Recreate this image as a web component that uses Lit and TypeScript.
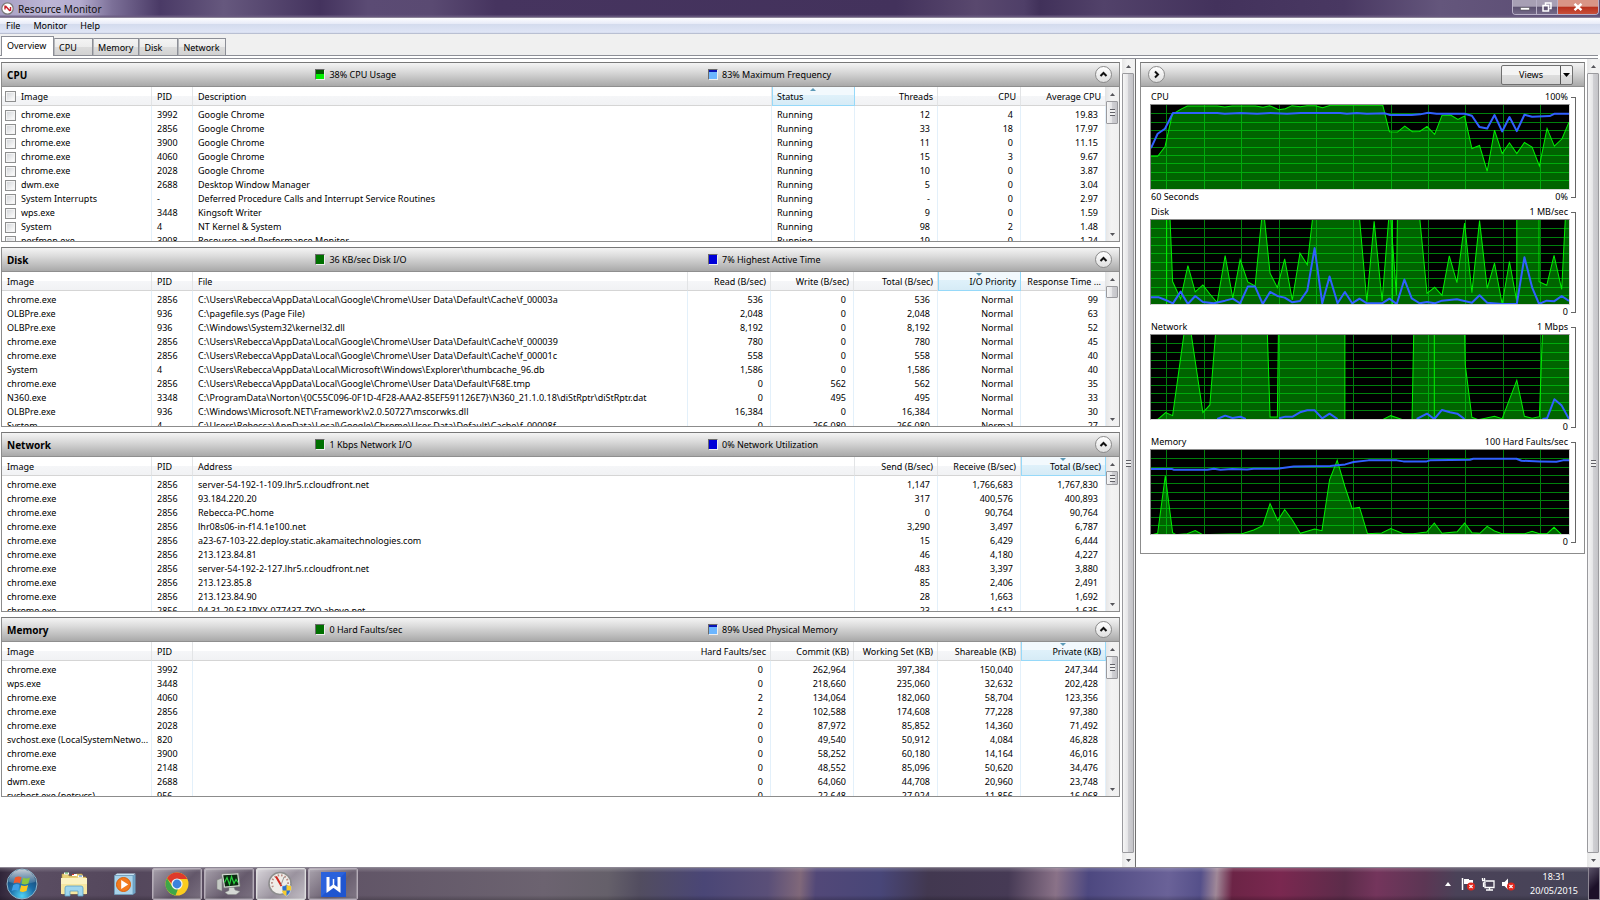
import { LitElement, html, svg, css, nothing } from "lit";
import { customElement, property } from "lit/decorators.js";
import { classMap } from "lit/directives/class-map.js";

type Column = { label: string; width?: number; numeric?: boolean; sorted?: "asc" | "desc" };
type Meter = { kind: string; text: string };
type Section = {
  title: string;
  meters: Meter[];
  checks?: boolean;
  thumb: "short" | "medium" | "long";
  columns: Column[];
  rows: string[][];
};
type Series = { title: string; max: string; min: string; span?: string; green: string; blue: string[]; marks?: number[] };

const CACHE = "C:\\Users\\Rebecca\\AppData\\Local\\Google\\Chrome\\User Data\\Default\\";

const SECTIONS: Section[] = [
  {
    title: "CPU",
    meters: [{ kind: "cpu", text: "38% CPU Usage" }, { kind: "high", text: "83% Maximum Frequency" }],
    checks: true,
    thumb: "long",
    columns: [
      { label: "Image", width: 150 },
      { label: "PID", width: 41 },
      { label: "Description" },
      { label: "Status", width: 83, sorted: "asc" },
      { label: "Threads", width: 83, numeric: true },
      { label: "CPU", width: 83, numeric: true },
      { label: "Average CPU", width: 85, numeric: true },
    ],
    rows: [
      ["chrome.exe", "3992", "Google Chrome", "Running", "12", "4", "19.83"],
      ["chrome.exe", "2856", "Google Chrome", "Running", "33", "18", "17.97"],
      ["chrome.exe", "3900", "Google Chrome", "Running", "11", "0", "11.15"],
      ["chrome.exe", "4060", "Google Chrome", "Running", "15", "3", "9.67"],
      ["chrome.exe", "2028", "Google Chrome", "Running", "10", "0", "3.87"],
      ["dwm.exe", "2688", "Desktop Window Manager", "Running", "5", "0", "3.04"],
      ["System Interrupts", "-", "Deferred Procedure Calls and Interrupt Service Routines", "Running", "-", "0", "2.97"],
      ["wps.exe", "3448", "Kingsoft Writer", "Running", "9", "0", "1.59"],
      ["System", "4", "NT Kernel & System", "Running", "98", "2", "1.48"],
      ["perfmon.exe", "3908", "Resource and Performance Monitor", "Running", "19", "0", "1.24"],
    ],
  },
  {
    title: "Disk",
    meters: [{ kind: "idle", text: "36 KB/sec Disk I/O" }, { kind: "low", text: "7% Highest Active Time" }],
    thumb: "short",
    columns: [
      { label: "Image", width: 150 },
      { label: "PID", width: 41 },
      { label: "File" },
      { label: "Read (B/sec)", width: 83, numeric: true },
      { label: "Write (B/sec)", width: 83, numeric: true },
      { label: "Total (B/sec)", width: 84, numeric: true },
      { label: "I/O Priority", width: 83, numeric: true, sorted: "desc" },
      { label: "Response Time ...", width: 85, numeric: true },
    ],
    rows: [
      ["chrome.exe", "2856", CACHE + "Cache\\f_00003a", "536", "0", "536", "Normal", "99"],
      ["OLBPre.exe", "936", "C:\\pagefile.sys (Page File)", "2,048", "0", "2,048", "Normal", "63"],
      ["OLBPre.exe", "936", "C:\\Windows\\System32\\kernel32.dll", "8,192", "0", "8,192", "Normal", "52"],
      ["chrome.exe", "2856", CACHE + "Cache\\f_000039", "780", "0", "780", "Normal", "45"],
      ["chrome.exe", "2856", CACHE + "Cache\\f_00001c", "558", "0", "558", "Normal", "40"],
      ["System", "4", "C:\\Users\\Rebecca\\AppData\\Local\\Microsoft\\Windows\\Explorer\\thumbcache_96.db", "1,586", "0", "1,586", "Normal", "40"],
      ["chrome.exe", "2856", CACHE + "F68E.tmp", "0", "562", "562", "Normal", "35"],
      ["N360.exe", "3348", "C:\\ProgramData\\Norton\\{0C55C096-0F1D-4F28-AAA2-85EF591126E7}\\N360_21.1.0.18\\diStRptr\\diStRptr.dat", "0", "495", "495", "Normal", "33"],
      ["OLBPre.exe", "936", "C:\\Windows\\Microsoft.NET\\Framework\\v2.0.50727\\mscorwks.dll", "16,384", "0", "16,384", "Normal", "30"],
      ["System", "4", CACHE + "Cache\\f_00008f", "0", "266,080", "266,080", "Normal", "27"],
    ],
  },
  {
    title: "Network",
    meters: [{ kind: "idle", text: "1 Kbps Network I/O" }, { kind: "low", text: "0% Network Utilization" }],
    thumb: "medium",
    columns: [
      { label: "Image", width: 150 },
      { label: "PID", width: 41 },
      { label: "Address" },
      { label: "Send (B/sec)", width: 83, numeric: true },
      { label: "Receive (B/sec)", width: 83, numeric: true },
      { label: "Total (B/sec)", width: 85, numeric: true, sorted: "desc" },
    ],
    rows: [
      ["chrome.exe", "2856", "server-54-192-1-109.lhr5.r.cloudfront.net", "1,147", "1,766,683", "1,767,830"],
      ["chrome.exe", "2856", "93.184.220.20", "317", "400,576", "400,893"],
      ["chrome.exe", "2856", "Rebecca-PC.home", "0", "90,764", "90,764"],
      ["chrome.exe", "2856", "lhr08s06-in-f14.1e100.net", "3,290", "3,497", "6,787"],
      ["chrome.exe", "2856", "a23-67-103-22.deploy.static.akamaitechnologies.com", "15", "6,429", "6,444"],
      ["chrome.exe", "2856", "213.123.84.81", "46", "4,180", "4,227"],
      ["chrome.exe", "2856", "server-54-192-2-127.lhr5.r.cloudfront.net", "483", "3,397", "3,880"],
      ["chrome.exe", "2856", "213.123.85.8", "85", "2,406", "2,491"],
      ["chrome.exe", "2856", "213.123.84.90", "28", "1,663", "1,692"],
      ["chrome.exe", "2856", "94.31.29.53.IPYX-077437-ZYO.above.net", "23", "1,612", "1,635"],
    ],
  },
  {
    title: "Memory",
    meters: [{ kind: "idle", text: "0 Hard Faults/sec" }, { kind: "high", text: "89% Used Physical Memory" }],
    thumb: "long",
    columns: [
      { label: "Image", width: 150 },
      { label: "PID", width: 41 },
      { label: "Hard Faults/sec", numeric: true },
      { label: "Commit (KB)", width: 83, numeric: true },
      { label: "Working Set (KB)", width: 84, numeric: true },
      { label: "Shareable (KB)", width: 83, numeric: true },
      { label: "Private (KB)", width: 85, numeric: true, sorted: "desc" },
    ],
    rows: [
      ["chrome.exe", "3992", "0", "262,964", "397,384", "150,040", "247,344"],
      ["wps.exe", "3448", "0", "218,660", "235,060", "32,632", "202,428"],
      ["chrome.exe", "4060", "2", "134,064", "182,060", "58,704", "123,356"],
      ["chrome.exe", "2856", "2", "102,588", "174,608", "77,228", "97,380"],
      ["chrome.exe", "2028", "0", "87,972", "85,852", "14,360", "71,492"],
      ["svchost.exe (LocalSystemNetwo...", "820", "0", "49,540", "50,912", "4,084", "46,828"],
      ["chrome.exe", "3900", "0", "58,252", "60,180", "14,164", "46,016"],
      ["chrome.exe", "2148", "0", "48,552", "85,096", "50,620", "34,476"],
      ["dwm.exe", "2688", "0", "64,060", "44,708", "20,960", "23,748"],
      ["svchost.exe (netsvcs)", "956", "0", "22,648", "27,924", "11,856", "16,068"],
    ],
  },
];

/* Plot coordinates: 1257 x 251 units, origin at the top left of the plot. */
const CHARTS: Series[] = [
  {
    title: "CPU", max: "100%", min: "0%", span: "60 Seconds",
    green: "0,153 20,153 42,125 64,28 89,13 109,3 199,3 222,6 244,3 314,3 337,7 357,2 384,14 404,11 424,2 449,5 469,2 494,2 516,8 539,1 697,1 717,80 741,81 763,63 786,80 808,79 830,64 853,88 875,31 901,30 923,43 943,33 965,130 988,121 1011,198 1033,75 1056,145 1078,113 1100,145 1123,112 1146,126 1168,182 1191,70 1213,123 1236,101 1257,51",
    blue: ["0,129 20,86 42,71 66,24 199,24 222,26 269,24 319,26 359,24 409,26 449,24 569,24 589,26 619,24 649,26 704,25 719,30 784,30 809,28 834,23 859,26 943,26 965,32 988,66 1011,70 1033,30 1056,79 1078,36 1100,78 1123,29 1146,35 1199,33 1214,26 1257,26"],
  },
  {
    title: "Disk", max: "1 MB/sec", min: "0",
    green: "0,-9 57,-9 65,184 89,236 111,136 133,215 156,194 177,221 199,247 223,106 246,234 268,118 291,185 313,197 333,-6 341,-6 358,159 380,202 402,116 425,239 448,99 470,134 486,-6 627,-6 649,244 671,4 695,242 715,-6 721,-6 738,224 741,-6 808,-6 830,219 853,201 875,225 897,107 920,187 943,9 965,217 988,2 1011,204 1033,129 1056,251 1078,124 1100,244 1100,-6 1167,-6 1167,184 1190,195 1212,106 1235,207 1246,-6 1260,-6",
    blue: ["0,231 24,231 44,239 66,249 89,214 111,251 133,227 156,245 189,249 223,241 246,235 268,249 291,199 313,199 336,251 358,215 380,227 402,232 425,246 448,242 470,211 492,84 515,249 537,169 561,249 583,215 605,249 627,235 649,249 695,249 717,235 739,251 762,178 784,234 808,249 830,245 853,249 875,241 920,237 965,247 988,225 1011,247 1056,251 1100,251 1123,111 1146,201 1167,251 1190,241 1212,243 1235,227 1257,242"],
    marks: [47, 726],
  },
  {
    title: "Network", max: "1 Mbps", min: "0",
    green: "0,256 22,251 44,232 65,241 99,-2 121,-2 156,232 177,209 194,-2 350,-2 358,245 380,245 383,-2 583,-2 583,256 690,256 721,241 757,253 785,256 790,-2 943,-2 945,89 965,246 984,253 999,250 1033,243 1056,250 1100,135 1123,243 1146,249 1168,244 1177,-2 1260,-2",
    blue: ["199,251 223,241 245,248 269,244 285,251", "385,249 404,244 426,244 448,231 470,225 492,225 515,249 537,235 561,251", "799,251 830,235 852,251 875,224 899,231 921,235 943,251", "1177,251 1191,249 1213,192 1235,211 1257,251"],
    marks: [852],
  },
  {
    title: "Memory", max: "100 Hard Faults/sec", min: "0",
    green: "0,254 20,249 43,77 65,247 75,253 109,250 133,241 156,253 274,250 309,239 336,226 358,160 381,211 402,178 425,209 449,249 492,236 514,241 537,89 560,31 583,109 605,175 627,171 651,250 694,248 721,235 759,250 789,250 829,245 852,218 875,249 921,244 943,218 965,247 989,249 1011,228 1033,242 1056,250 1124,250 1146,243 1168,250 1191,250 1212,231 1235,253 1257,253",
    blue: ["0,57 64,57 69,59 169,59 189,56 209,59 244,57 289,58 309,56 379,56 429,49 539,48 584,43 609,36 654,31 739,31 759,34 829,34 839,31 899,30 959,29 969,26 1099,26 1114,32 1169,34 1219,35 1239,31 1257,31"],
  },
];

const V_GRID = [48, 160, 272, 385, 497, 610, 722, 835, 947, 1060, 1172];
const H_GRID = [26, 51, 76, 101, 126, 151, 176, 202, 227];

@customElement("rm-scrollbar")
class RmScrollbar extends LitElement {
  @property() thumb = "fill";

  static styles = css`
    :host { display: flex; flex-direction: column; width: 13px; flex: none; background: linear-gradient(90deg, #e6e6e6, #f3f3f3 40%, #f0f0f0); }
    .arrow { height: 14px; padding: 0; border: 0; background: none; display: flex; align-items: center; justify-content: center; flex: none; }
    .arrow svg { width: 5px; height: 3px; }
    .track { flex: 1; display: flex; flex-direction: column; min-height: 0; }
    .thumb { box-sizing: border-box; width: 12px; border: 1px solid #9a9a9e; border-radius: 1px; background: linear-gradient(90deg, #f6f6f6, #e6e6e8 45%, #cfcfd3 55%, #c4c4c8); display: flex; align-items: center; justify-content: center; }
    .thumb::after { content: ""; width: 5px; height: 7px; background: repeating-linear-gradient(180deg, #606066 0 1px, #f0f0f0 1px 3px); }
    .fill { flex: 1; }
    .long { height: 23px; }
    .medium { height: 14px; }
    .short { height: 12px; }
    .short::after { display: none; }
  `;

  render() {
    return html`
      <button class="arrow" aria-label="Scroll up"><svg viewBox="0 0 5 3"><path d="M0 3 2.5 0 5 3z" fill="#55555a" /></svg></button>
      <div class="track"><div class=${"thumb " + this.thumb}></div></div>
      <button class="arrow" aria-label="Scroll down"><svg viewBox="0 0 5 3"><path d="M0 0 2.5 3 5 0z" fill="#55555a" /></svg></button>
    `;
  }
}

@customElement("rm-section")
class RmSection extends LitElement {
  @property({ attribute: false }) data!: Section;

  static styles = css`
    :host { display: block; border: 1px solid #8c8c8c; border-top-color: #777; background: #fff; }
    .bar { box-sizing: border-box; height: 24px; display: grid; grid-template-columns: 281fr 352fr 347fr 20fr; align-items: center; background: linear-gradient(#f4f4f4, #dcdcdc 35%, #a9a9a9); border-bottom: 1px solid #8f8f8f; }
    h2 { margin: 0; padding-left: 5px; font-size: 10px; line-height: 14px; font-weight: 700; color: #000; }
    .meter { display: flex; align-items: center; gap: 4px; white-space: nowrap; }
    .swatch { box-sizing: border-box; width: 10px; height: 11px; border: 1px solid #6a6a6a; border-right-color: #eee; border-bottom-color: #eee; }
    .cpu { background: linear-gradient(#005a00 50%, #00f000 50%); }
    .idle { background: #007000; }
    .high { background: linear-gradient(#0a14b4 20%, #6cb6ff 20%); }
    .low { background: #0000d8; }
    .toggle { justify-self: end; margin-right: 7px; width: 17px; height: 17px; padding: 0; border: 1px solid #8a8a8a; border-radius: 50%; background: linear-gradient(#fff, #e0e0e0); display: grid; place-items: center; }
    .toggle svg { width: 9px; height: 9px; }
    .body { display: flex; height: 154px; overflow: hidden; }
    .list { flex: 1; min-width: 0; overflow: hidden; }
    table { width: 100%; table-layout: fixed; border-collapse: separate; border-spacing: 0; }
    th, td { box-sizing: border-box; padding: 0 7px 0 5px; text-align: left; font-weight: 400; white-space: nowrap; overflow: hidden; border-right: 1px solid #e3f0fa; }
    th:first-child, td:first-child { padding-right: 0; }
    th { height: 19px; padding-right: 4px; line-height: 17px; border-bottom: 1px solid #d5d5d5; border-right-color: #e2e4e6; background: linear-gradient(#fff 50%, #f5f6f8 50%, #f1f2f4); position: relative; }
    td { height: 14px; line-height: 14px; }
    tbody tr:first-child td { padding-top: 2px; height: 16px; }
    .num { text-align: right; }
    .sorted { background: linear-gradient(#f2f9fd 45%, #dff1fa 45%, #d6ebf6); border-bottom-color: #96d9f9; border-right-color: #96d9f9; box-shadow: inset 1px 0 #96d9f9; }
    .caret { position: absolute; top: 1px; left: calc(50% - 3px); width: 6px; height: 3px; }
    .named { display: flex; align-items: center; gap: 5px; margin-left: -2px; }
    input { appearance: none; box-sizing: border-box; width: 11px; height: 11px; margin: 0; flex: none; border: 1px solid #8e8f8f; background: linear-gradient(135deg, #cfd2d6, #f8f8f8 80%); box-shadow: inset 0 0 0 1px #f4f4f4; }
  `;

  private first(label: string) {
    return this.data.checks ? html`<label class="named"><input type="checkbox" />${label}</label>` : label;
  }

  render() {
    const { title, meters, columns, rows, thumb } = this.data;
    return html`
      <header class="bar">
        <h2>${title}</h2>
        ${meters.map((m) => html`<div class="meter"><span class=${"swatch " + m.kind}></span>${m.text}</div>`)}
        <button class="toggle" aria-label=${"Collapse " + title}>
          <svg viewBox="0 0 9 9"><path d="M1.5 6 4.5 3l3 3" fill="none" stroke="#111" stroke-width="2" /></svg>
        </button>
      </header>
      <div class="body">
        <div class="list">
          <table>
            <colgroup>${columns.map((c) => (c.width ? html`<col style="width:${c.width}px" />` : html`<col />`))}</colgroup>
            <thead>
              <tr>
                ${columns.map((c, i) => html`<th class=${classMap({ num: !!c.numeric, sorted: !!c.sorted })}>${i === 0 ? this.first(c.label) : c.label}${c.sorted
                  ? html`<svg class="caret" viewBox="0 0 6 3"><path d=${c.sorted === "asc" ? "M0 3 3 0l3 3z" : "M0 0l3 3 3-3z"} fill="#5c9ab8" /></svg>`
                  : nothing}</th>`)}
              </tr>
            </thead>
            <tbody>
              ${rows.map((r) => html`<tr>${r.map((v, i) => html`<td class=${classMap({ num: !!columns[i].numeric })}>${i === 0 ? this.first(v) : v}</td>`)}</tr>`)}
            </tbody>
          </table>
        </div>
        <rm-scrollbar thumb=${thumb}></rm-scrollbar>
      </div>
    `;
  }
}

@customElement("rm-chart")
class RmChart extends LitElement {
  @property({ attribute: false }) data!: Series;

  static styles = css`
    :host { display: grid; grid-template-columns: 1fr 6px; }
    .line { display: flex; justify-content: space-between; line-height: 14px; height: 14px; padding: 0 2px 0 1px; }
    .top { height: 15px; line-height: 15px; }
    .plot { box-sizing: border-box; display: block; width: 100%; height: 86px; background: #000; border: 1px solid #8a8a8a; border-right-color: #d8d8d8; border-bottom-color: #d8d8d8; }
    .plot * { vector-effect: non-scaling-stroke; }
    .grid { stroke: #00dc14; stroke-opacity: 0.58; fill: none; shape-rendering: crispEdges; }
    .area { fill: #006400; }
    .edge { fill: none; stroke: #00f000; stroke-width: 1; }
    .trend { fill: none; stroke: #3060ff; stroke-width: 2; stroke-linejoin: round; }
    .bracket { margin: 8px 0 6px 1px; border: 1px solid #666; border-left: 0; }
    .main { min-width: 0; }
  `;

  render() {
    const d = this.data;
    return html`
      <div class="main">
        <div class="line top"><span>${d.title}</span><span>${d.max}</span></div>
        <svg class="plot" viewBox="0 0 1257 251" preserveAspectRatio="none" role="img" aria-label=${d.title + " history"}>
          <polygon class="area" points=${`0,251 ${d.green} 1257,251`} />
          <path class="grid" d=${V_GRID.map((x) => `M${x} 0V251`).join("") + H_GRID.map((y) => `M0 ${y}H1257`).join("")} />
          <polyline class="edge" points=${d.green} />
          ${(d.marks ?? []).map((x) => svg`<path class="edge" d=${`M${x} 0V251`} />`)}
          ${d.blue.map((b) => svg`<polyline class="trend" points=${b} />`)}
        </svg>
        <div class="line"><span>${d.span ?? ""}</span><span>${d.min}</span></div>
      </div>
      <div class="bracket"></div>
    `;
  }
}

const orb = html`<svg viewBox="0 0 32 32" width="32" height="32">
  <defs>
    <radialGradient id="ob" cx=".5" cy=".9" r=".9"><stop offset="0" stop-color="#4fd2f4" /><stop offset=".45" stop-color="#1c6ea8" /><stop offset="1" stop-color="#16365c" /></radialGradient>
    <linearGradient id="og" x2="0" y2="1"><stop offset="0" stop-color="#fff" stop-opacity=".75" /><stop offset="1" stop-color="#fff" stop-opacity=".1" /></linearGradient>
  </defs>
  <circle cx="16" cy="16" r="15" fill="url(#ob)" stroke="#8fb4c8" />
  <path d="M2.5 14A13.5 12.5 0 0 1 29.500 14Q16 18 2.500 14z" fill="url(#og)" />
  <path d="M9 9.500q3.500-2 6.500-.3l-1.500 6q-3-1.500-6.500.2z" fill="#f0582a" />
  <path d="M17 9.800q3.500 1.500 7-.3l-1.600 6q-3.400 1.700-6.900.2z" fill="#8cc63c" />
  <path d="M7.200 17q3.400-1.700 6.500-.2l-1.500 6q-3-1.600-6.600.1z" fill="#3f9fe6" />
  <path d="M15.200 17.300q3.400 1.500 6.900-.2l-1.600 6q-3.400 1.600-6.800.1z" fill="#fcc61c" />
</svg>`;

const folder = html`<svg viewBox="0 0 28 26" width="28" height="26">
  <path d="M2 3h6l1 2h7V3h6l1 3h3v17H2z" fill="#e8cf77" stroke="#b9993c" stroke-width=".6" />
  <path d="M4 2.500h5M12 4h5M18 5.500h5" stroke="#fff" stroke-width="2" /><path d="M5 2h3" stroke="#3aa54a" /><path d="M12 3.500h2" stroke="#e2372b" /><path d="M19 5h3" stroke="#2b78c8" />
  <path d="M1 7h26v16H1z" fill="#f6e6a0" /><path d="M1 7h26v6H1z" fill="#fbf2c2" />
  <path d="M5 25v-8q0-2 2-2h14q2 0 2 2v8h-5v-5h-8v5z" fill="#9fd6ee" stroke="#5a9fc4" stroke-width=".8" />
</svg>`;

const player = html`<svg viewBox="0 0 24 24" width="24" height="24">
  <path d="M20 3.500 22.500 2v19L20 22.500z" fill="#6fa4c6" /><path d="M1.500 3.500 4 1.500h18.500L20 3.500z" fill="#c6e4f4" />
  <path d="M1.500 3.500H20v19H1.500z" fill="#a9d3ea" stroke="#6d9dbc" stroke-width=".8" />
  <circle cx="10.500" cy="12.500" r="7" fill="#f37a1d" stroke="#d95f0a" /><path d="M8.200 8v9l7-4.500z" fill="#fff" />
</svg>`;

const chrome = html`<svg viewBox="0 0 24 24" width="24" height="24">
  <circle cx="12" cy="12" r="11.500" fill="#fbcc1f" />
  <path d="M12 .5A11.500 11.500 0 0 1 22.300 7H12L7 12 2 6.300A11.500 11.500 0 0 1 12 .5z" fill="#de3a2b" />
  <path d="M2 6.300 7.500 15 13 17l-2.500 6.400A11.500 11.500 0 0 1 2 6.300z" fill="#3fa648" />
  <circle cx="12" cy="12" r="5.600" fill="#f4f4f4" /><circle cx="12" cy="12" r="4.400" fill="#3c82dc" />
</svg>`;

const monitor = html`<svg viewBox="0 0 26 24" width="26" height="24">
  <path d="M1 8 6 6v13l-5-2z" fill="#c4c9c4" stroke="#7d837d" stroke-width=".5" />
  <path d="M5.500 2 22.500 1l1.500 13.500L8 16z" fill="#e3e7e3" stroke="#7d837d" stroke-width=".7" />
  <path d="M7.200 3.200 21.300 2.400l1.200 10.800L9 14.400z" fill="#0b2a10" /><path d="M8.500 10.500l2.500-5 2.500 7 2-8 2.500 7 2-4 2 3" fill="none" stroke="#27d13d" stroke-width="1.200" />
  <path d="M13 15.500h5l1 2.500 5 1.500-4 3h-8l-3-2 4-2z" fill="#d5d8d5" stroke="#8a8f8a" stroke-width=".5" />
</svg>`;

const gauge = html`<svg viewBox="0 0 26 26" width="26" height="26">
  <circle cx="12" cy="12.500" r="11" fill="#efece8" stroke="#8d8d8d" stroke-width="1.600" />
  <path d="M5 16A8 8 0 1 1 19.500 15" fill="none" stroke="#b98c84" stroke-dasharray="1.500 2" stroke-width="2" />
  <path d="M8 5.500 13.500 15" stroke="#d0241c" stroke-width="2" /><path d="M16 6l-3 8" stroke="#999" />
  <path d="M14 15q3 0 4.500-1.500Q20 15 23 15q.5 7-4.500 10-5-3-4.500-10z" fill="#2b6fd0" stroke="#dfe8f4" stroke-width=".6" /><path d="M18.500 13.500Q20 15 23 15l.1 4.500h-4.600zM14 19.500h4.500V25q-4-2-4.500-5.500z" fill="#f8cc2c" />
</svg>`;

const writer = html`<svg viewBox="0 0 25 25" width="25" height="25">
  <path d="M0 0h25v25H0z" fill="#1f55d0" /><path d="M0 0h25L0 25z" fill="#2a62dc" />
  <path d="M7 5v13l5.500-4 5.500 4V5" fill="none" stroke="#fff" stroke-width="3" /><path d="M12.500 7v8" stroke="#fff" stroke-width="1.500" />
</svg>`;

const badge = svg`<circle cx="10" cy="9.500" r="4" fill="#e0261c" /><path d="M8.400 7.900l3.200 3.200m0-3.200-3.200 3.200" stroke="#fff" stroke-width="1.300" />`;

@customElement("app-root")
class AppRoot extends LitElement {
  static styles = css`
    :host { display: flex; flex-direction: column; height: 100vh; overflow: hidden; background: #fff; color: #000; font-family: "Noto Sans", "Open Sans", sans-serif; font-size: 9px; line-height: 14px; }
    button { font: inherit; color: inherit; }
    .title { box-sizing: border-box; height: 18px; flex: none; display: flex; align-items: flex-start; justify-content: space-between; padding-right: 1px; border-bottom: 1px solid #8b8398; color: #111;
      background: linear-gradient(#fff0 85%, #6a5b80), linear-gradient(90deg, #a8a0c4 0, #bdb6d6 3%, #b3abce 5%, #7c7098 7%, #4a3a66 10%, #66587e 14%, #44335e 20%, #5b4b74 23%, #5a4a72 27%, #46345f 31%, #43325c 56%, #59486e 61%, #4f3f68 64%, #41315a 65%, #52426a 69%, #43325c 76%, #493862 84%, #64567c 90%, #5a4b72); }
    .name { display: flex; align-items: center; gap: 4px; height: 17px; margin: 0; padding-left: 1px; font-size: 10px; font-weight: 400; }
    .controls { display: flex; border: 1px solid #b9b1c8; border-top: 0; border-radius: 0 0 4px 4px; overflow: hidden; }
    .controls button { width: 24px; height: 14px; padding: 0; border: 0; border-right: 1px solid #b9b1c8; background: linear-gradient(#a79fb4 45%, #5b5070 50%, #756a88); display: grid; place-items: center; }
    .controls .restore { width: 21px; }
    .controls .close { width: 40px; border-right: 0; background: linear-gradient(#d99586 45%, #b8301c 50%, #c8503a); }
    .menu { height: 16px; flex: none; display: flex; align-items: center; gap: 13px; padding-left: 6px; background: linear-gradient(#fdfdff 0, #e8ecf8 35%, #d3dbed 36%, #dfe5f6 90%, #b9bfd2 94%); }
    .menu button { padding: 0; border: 0; background: none; font-size: 9px; }
    .tabs { box-sizing: border-box; height: 21px; flex: none; display: flex; align-items: flex-end; padding-left: 1px; background: #f0f0f0; }
    .tabs button { box-sizing: border-box; height: 17px; min-width: 39px; padding: 0 5px 0 4px; text-align: left; border: 1px solid #8c8e96; border-bottom: 0; border-left-color: #b5b7bb; background: linear-gradient(#f4f4f4, #ececec 50%, #dcdcdc 50%, #d2d2d2); line-height: 15px; }
    .tabs .current { position: relative; height: 20px; min-width: 53px; margin-bottom: -1px; padding: 0 5px 2px; background: #fff; border-left-color: #8c8e96; }
    .edge { box-sizing: border-box; height: 4px; flex: none; border: 1px solid #8c8e96; border-width: 1px 0; margin-right: 2px; background: #fff; }
    .panes { flex: 1; min-height: 0; display: flex; background: #fff; }
    .pane { box-sizing: border-box; display: flex; gap: 2px; min-width: 0; }
    .details { flex: 1; padding-left: 1px; border-right: 1px solid #707070; }
    .graphs { flex: 0 0 29%; padding-left: 4px; }
    .scroll { flex: 1; min-width: 0; padding-top: 3px; display: flex; flex-direction: column; gap: 5px; overflow: hidden; }
    .graphbox { border: 1px solid #8c8c8c; border-top-color: #777; padding-bottom: 4px; }
    .graphbar { box-sizing: border-box; height: 24px; margin-bottom: 2px; padding: 0 11px 0 7px; display: flex; align-items: center; justify-content: space-between; background: linear-gradient(#f4f4f4, #dcdcdc 35%, #a9a9a9); border-bottom: 1px solid #8f8f8f; }
    .round { width: 17px; height: 17px; padding: 0; border: 1px solid #8a8a8a; border-radius: 50%; background: linear-gradient(#fff, #e0e0e0); display: grid; place-items: center; }
    .split { display: flex; height: 18px; border: 1px solid #707070; border-radius: 2px; background: linear-gradient(#f4f4f4 50%, #dedede 50%, #d2d2d2); }
    .split button { padding: 0; border: 0; background: none; }
    .split .views { width: 58px; }
    .split .drop { width: 12px; border-left: 1px solid #555; display: grid; place-items: center; }
    .charts { padding: 0 8px 0 9px; }
    .taskbar { box-sizing: border-box; height: 33px; flex: none; display: flex; align-items: stretch; border-top: 1px solid #8d8794; color: #fff;
      background: linear-gradient(#fff3, #fff0 14%, #fff0 85%, #0003), linear-gradient(93deg, #2f2438 0, #5a4d62 2%, #54475c 8%, #615567 22%, #6c6370 34%, #65606a 38%, #524d60 40%, #4a4676 44%, #5a4f78 48%, #80687a 50%, #524878 51%, #484678 55%, #423850 58%, #463a55 63%, #8a7288 66%, #4d4880 68%, #6a6298 73%, #55508a 75%, #a08898 76%, #6c2446 77%, #7a2850 80%, #5c2c4a 84%, #74355c 86%, #5c3654 89%, #4a4258 91%, #464458); }
    .task { padding: 0; border: 0; background: none; display: grid; place-items: center; flex: none; }
    .start { width: 44px; }
    .pinned { width: 60px; }
    .second { width: 41px; margin-right: 7px; }
    .open { box-sizing: border-box; width: 50px; margin-right: 2px; border: 1px solid #b5acb8; border-radius: 2px; background: linear-gradient(135deg, #fff7, #fff1 60%, #fff3); box-shadow: inset 0 0 0 1px #fff3; }
    .front { background: linear-gradient(135deg, #ffffffc0, #ffffff60 55%, #ffffffa0); border-color: #ddd; }
    .tray { margin-left: auto; display: flex; align-items: center; gap: 6px; }
    .tray .icon { padding: 0; border: 0; background: none; width: 14px; height: 14px; display: grid; place-items: center; }
    .clock { width: 56px; margin-left: 5px; text-align: center; }
    .desktop { align-self: stretch; width: 12px; padding: 0; border: 1px solid #8d8794; border-top: 0; background: linear-gradient(135deg, #5a5268, #1c1028 60%); }
  `;

  render() {
    return html`
      <header class="title">
        <h1 class="name">
          <svg viewBox="0 0 13 13" width="13" height="13"><circle cx="6.500" cy="6.500" r="5.700" fill="#fff" stroke="#777" stroke-width="1.200" /><path d="M4 3.500v4M4.500 4l4.500 5M9.500 5v4" fill="none" stroke="#c8202c" stroke-width="1.400" /></svg>
          Resource Monitor
        </h1>
        <div class="controls">
          <button aria-label="Minimise"><svg viewBox="0 0 10 8" width="10" height="8"><path d="M.5 4.500h9v2.500h-9z" fill="#fff" stroke="#444" stroke-width=".5" /></svg></button>
          <button class="restore" aria-label="Restore"><svg viewBox="0 0 10 10" width="10" height="10"><path d="M3.500 3V1h5.500v5.500H7.500M1 3.500h5.500V9H1z" fill="none" stroke="#fff" stroke-width="1.500" /></svg></button>
          <button class="close" aria-label="Close"><svg viewBox="0 0 10 8" width="10" height="8"><path d="M1.500 .8 8.500 7.200M8.500 .8 1.500 7.200" stroke="#fff" stroke-width="2.300" /></svg></button>
        </div>
      </header>
      <nav class="menu"><button>File</button><button>Monitor</button><button>Help</button></nav>
      <div class="tabs" role="tablist">
        ${["Overview", "CPU", "Memory", "Disk", "Network"].map((t, i) => html`<button role="tab" class=${classMap({ current: i === 0 })} aria-selected=${i === 0}>${t}</button>`)}
      </div>
      <div class="edge"></div>
      <main class="panes">
        <section class="pane details">
          <div class="scroll">${SECTIONS.map((s) => html`<rm-section .data=${s}></rm-section>`)}</div>
          <rm-scrollbar></rm-scrollbar>
        </section>
        <aside class="pane graphs">
          <div class="scroll">
            <div class="graphbox">
              <div class="graphbar">
                <button class="round" aria-label="Hide graphs"><svg viewBox="0 0 9 9" width="9" height="9"><path d="M3 1.500 6 4.500l-3 3" fill="none" stroke="#111" stroke-width="2" /></svg></button>
                <div class="split">
                  <button class="views">Views</button>
                  <button class="drop" aria-label="View options"><svg viewBox="0 0 7 4" width="7" height="4"><path d="M0 0h7L3.500 4z" fill="#000" /></svg></button>
                </div>
              </div>
              <div class="charts">${CHARTS.map((c) => html`<rm-chart .data=${c}></rm-chart>`)}</div>
            </div>
          </div>
          <rm-scrollbar></rm-scrollbar>
        </aside>
      </main>
      <footer class="taskbar">
        <button class="task start" aria-label="Start">${orb}</button>
        <button class="task pinned" aria-label="Windows Explorer">${folder}</button>
        <button class="task second" aria-label="Media Player">${player}</button>
        <button class="task open" aria-label="Google Chrome">${chrome}</button>
        <button class="task open" aria-label="Task Manager">${monitor}</button>
        <button class="task open front" aria-label="Resource Monitor">${gauge}</button>
        <button class="task open" aria-label="Kingsoft Writer">${writer}</button>
        <div class="tray">
          <button class="icon" aria-label="Show hidden icons"><svg viewBox="0 0 6 4" width="6" height="4"><path d="M0 4 3 0l3 4z" fill="#fff" /></svg></button>
          <button class="icon" aria-label="Action Center"><svg viewBox="0 0 14 14" width="14" height="14"><path d="M1.500 1v12" stroke="#fff" stroke-width="1.500" /><path d="M3 2h5v1h4v5H7V7H3z" fill="#fff" />${badge}</svg></button>
          <button class="icon" aria-label="Network"><svg viewBox="0 0 14 14" width="14" height="14"><path d="M5 4h8v6.500H4V7M5 13h7M8.500 11v2M1.500 1v2M3.500 1v2M1 3.500h3V6H2.500v4" fill="none" stroke="#fff" stroke-width="1.300" /></svg></button>
          <button class="icon" aria-label="Volume muted"><svg viewBox="0 0 14 14" width="14" height="14"><path d="M1 5h2.500L7 1.500v11L3.500 9H1z" fill="#fff" />${badge}</svg></button>
          <time class="clock">18:31<br />20/05/2015</time>
          <button class="desktop" aria-label="Show desktop"></button>
        </div>
      </footer>
    `;
  }
}
